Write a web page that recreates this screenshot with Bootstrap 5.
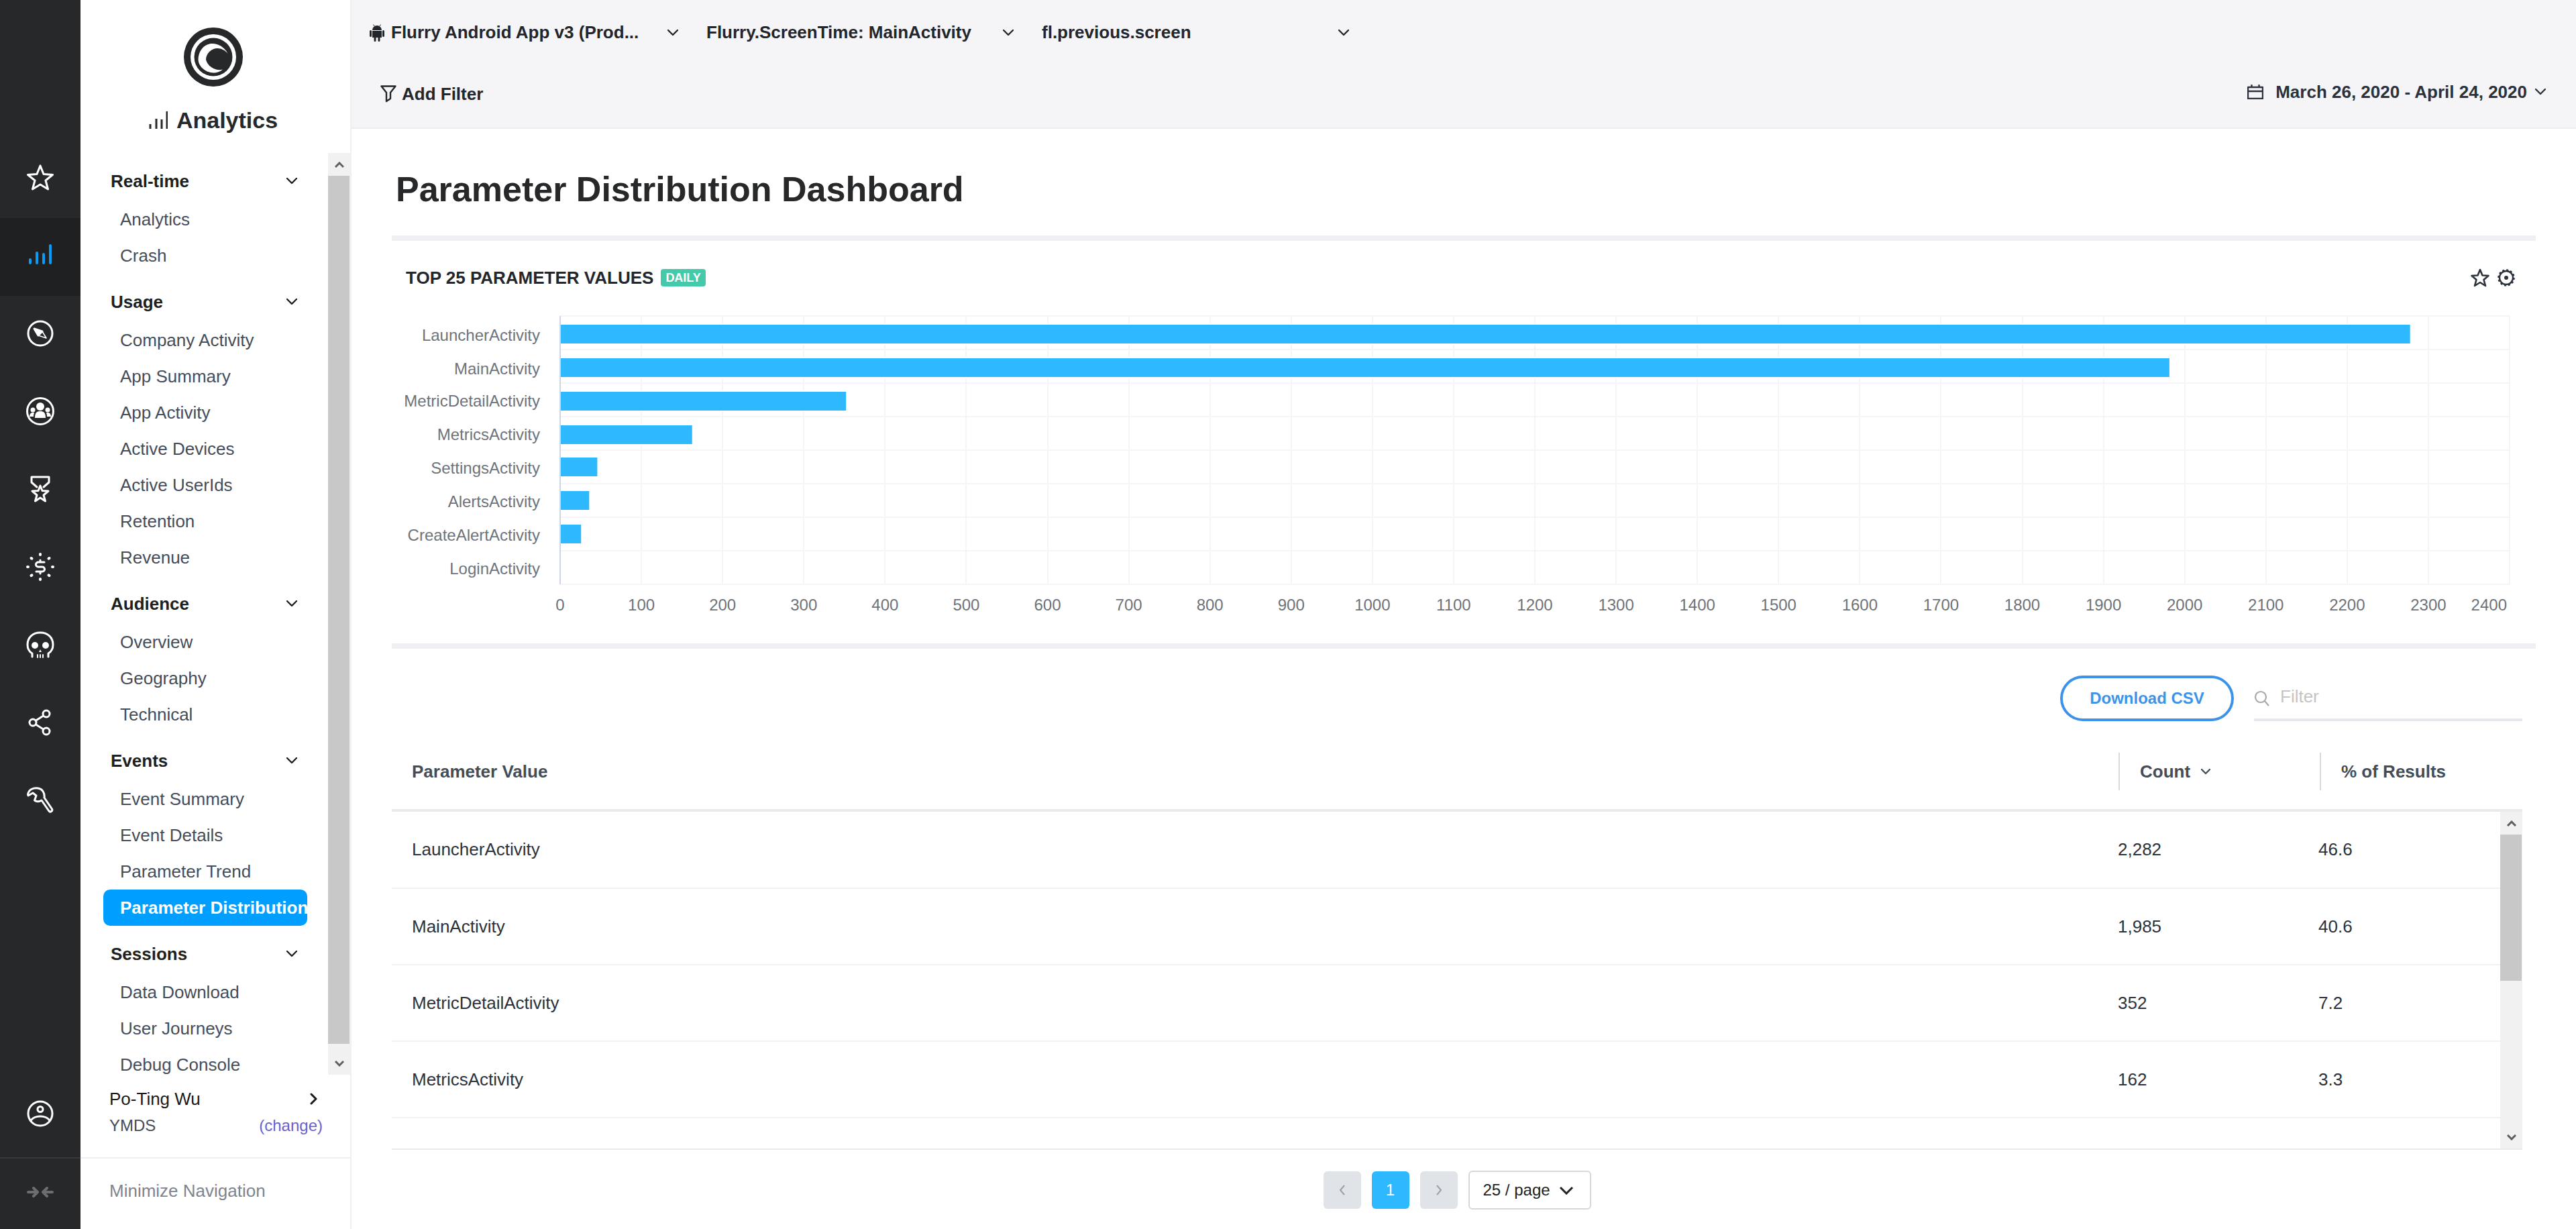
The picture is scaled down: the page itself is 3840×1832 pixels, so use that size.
<!DOCTYPE html>
<html lang="en">
<head>
  <meta charset="UTF-8">
  <meta name="viewport" content="width=device-width, initial-scale=1.0">
  <title>Parameter Distribution Dashboard</title>
  <link href="https://cdn.jsdelivr.net/npm/bootstrap@5.3.0/dist/css/bootstrap.min.css" rel="stylesheet">
  <style>
    body { font-family: "Liberation Sans", Arial, sans-serif; font-size: 26px; color: #2b323c; background: #fff; }
    svg { display: block; flex: none; }

    /* left icon rail */
    .rail { width: 120px; background: #27282a; }
    .rail-list { padding-top: 209px; }
    .rail-item { height: 116px; padding-bottom: 4px; }
    .rail-item.on { background: #1f2022; }
    .rail-user { height: 123px; padding-bottom: 8px; }
    .rail-foot { height: 107px; border-top: 2px solid #37383a; padding-bottom: 6px; }
    .rail svg { stroke: #fff; fill: none; stroke-width: 3; stroke-linejoin: round; stroke-linecap: round; }

    /* side menu */
    .side { width: 404px; border-right: 2px solid #f0f0f2; }
    .brand { height: 228px; padding: 41px 6px 0 0; }
    .brand-name { font-size: 34px; font-weight: 700; color: #27282a; margin-top: 25px; line-height: 50px; }
    .brand-name svg { margin-right: 13px; }
    .side-scroll { height: 1374px; }
    .side-menu { width: 369px; }
    .sn-head { height: 60px; margin-top: 12px; padding: 0 46px 0 45px; font-weight: 700; color: #1e1f21; }
    .sn-item { height: 54px; line-height: 54px; margin-left: 34px; width: 304px; padding-left: 25px; color: #454d5a; white-space: nowrap; overflow: hidden; }
    .sn-item.on { background: #009fff; color: #fff; font-weight: 700; border-radius: 10px; }
    .user-box { height: 123px; padding: 16px 41px 0 43px; }
    .user-name { color: #1a1a1a; line-height: 40px; padding-right: 7px; }
    .user-org { font-size: 24px; color: #454d5a; line-height: 40px; }
    .user-org span { color: #6a5fd0; }
    .side-foot { height: 107px; border-top: 2px solid #f0f0f2; padding: 0 0 8px 43px; color: #7d8590; }

    /* fake scrollbars */
    .sb { background: #f1f1f1; width: 33px; }
    .sb-btn { height: 34px; }
    .sb-thumb { background: #c8c8c8; margin-right: 1px; }
    .side .sb-thumb { height: 1294px; }
    .table-wrap .sb-thumb { height: 218px; }
    .sb svg { stroke: #5f5f5f; fill: none; stroke-width: 3; }

    /* top filters */
    .top-bar { height: 192px; background: #f5f5f8; border-bottom: 2px solid #ececef; font-weight: 700; color: #23262b; }
    .top-row1 { height: 96px; padding-left: 27px; padding-top: 1px; }
    .top-sel { width: 500px; padding-right: 42px; }
    .top-sel.first { width: 502px; }
    .android-wrap { gap: 10px; }
    .top-row2 { height: 88px; padding: 0 45px 0 43px; }
    .date-pick { color: #2b323c; margin-bottom: 6px; }
    .date-text { margin: 0 12px 0 18px; }
    .stroke-icon { stroke: currentColor; fill: none; stroke-width: 2.4; stroke-linecap: round; stroke-linejoin: round; }

    /* page body */
    .page-body { padding: 0 60px; }
    .page-title { height: 159px; padding: 21px 0 0 6px; margin: 0; font-size: 52px; font-weight: 700; color: #27282a; line-height: 138px; }
    .rule-thick { height: 8px; background: #f0f0f4; }
    .chart-head { height: 100px; padding: 10px 31px 0 21px; }
    .chart-icons { gap: 12px; }
    .chart-title { font-weight: 700; font-size: 26px; color: #23262b; }
    .tag-daily { font-size: 18px; font-weight: 700; color: #fff; background: #45c9ab; border-radius: 4px; padding: 0 7px; height: 26px; line-height: 26px; margin-left: 11px; }
    .chart-box { height: 500px; }
    .chart-box text { font-size: 24px; fill: #6e7379; font-family: "Liberation Sans", Arial, sans-serif; }
    .tools { height: 155px; padding: 40px 20px 0 0; }
    .btn-csv { height: 68px; width: 259px; border: 4px solid #3d93e8; color: #3d93e8; font-size: 24px; font-weight: 700; background: #fff; padding: 0; }
    .filter-box { width: 400px; height: 68px; margin-left: 30px; border-bottom: 4px solid #e8e8ec; padding-bottom: 2px; }
    .filter-box svg { margin-top: 6px; }
    .filter-box input { border: 0; outline: 0; width: 340px; margin-left: 15px; font-size: 26px; background: transparent; padding: 0; color: #2b323c; }
    .filter-box input::placeholder { color: #c4c4c4; }
    .table-wrap { width: 3176px; }
    .head-row { height: 88px; border-bottom: 4px solid #e9e9ec; font-weight: 700; color: #454d57; padding-bottom: 28px; }
    .hcol-a { width: 2574px; padding-left: 30px; }
    .hcol-b { width: 300px; height: 56px; border-left: 2px solid #d9d9dc; padding-left: 30px; }
    .hcol-c { width: 302px; height: 56px; border-left: 2px solid #d9d9dc; padding-left: 30px; }
    .tbody-wrap { height: 504px; border-bottom: 2px solid #e9e9ec; }
    .rows-clip { width: 3143px; overflow: hidden; }
    .rows { width: 3143px; table-layout: fixed; }
    .rows td { height: 114px; padding: 0; vertical-align: middle; font-size: 26px; color: #2b323c; border-bottom: 2px solid #f2f2f4; }
    .rows td:first-child { padding-left: 30px; }
    .rows .cw-a { width: 2573px; }
    .rows .cw-b { width: 299px; }
    .pager { width: 3176px; margin-top: 31px; gap: 16px; }
    .pg-btn { width: 56px; height: 56px; border-radius: 6px; background: #e0e3e7; color: #9aa0a6; font-size: 24px; }
    .pg-btn.on { background: #2eb9ff; color: #fff; }
    .pg-size { width: 183px; height: 58px; background: #fff; border: 2px solid #d5d9dc; border-radius: 6px; font-size: 24px; color: #222; padding: 0 24px 0 20px; }
  </style>
</head>
<body class="vh-100 overflow-hidden">
  <div class="d-flex h-100">
    <!-- Icon rail -->
    <div class="rail d-flex flex-column flex-shrink-0">
      <div class="rail-list flex-grow-1">
        <div class="rail-item d-flex align-items-center justify-content-center">
          <svg width="40" height="40" viewBox="0 0 40 40"><polygon points="20,2 25,14.5 38.5,15.5 28,24 31.5,37 20,30 8.500,37 12,24 1.500,15.500 15,14.500"/></svg>
        </div>
        <div class="rail-item on d-flex align-items-center justify-content-center">
          <svg width="40" height="40" viewBox="0 0 40 40" style="stroke:#0a9cf5;stroke-width:4"><path d="M5 31v-5M15 31V16M25 31V18M35 31V5"/></svg>
        </div>
        <div class="rail-item d-flex align-items-center justify-content-center">
          <svg width="40" height="40" viewBox="0 0 40 40"><circle cx="20" cy="20" r="18"/><polygon points="11,13 23,17 17,23" fill="#fff"/><path d="M23 17l6 10-12-4" stroke-width="1.600"/></svg>
        </div>
        <div class="rail-item d-flex align-items-center justify-content-center">
          <svg width="42" height="42" viewBox="0 0 42 42"><circle cx="21" cy="21" r="19.500"/><g fill="#fff" stroke="none"><circle cx="21" cy="14" r="6"/><path d="M13 31c0-8 3-10 8-10s8 2 8 10z"/><circle cx="10" cy="19" r="3.500"/><circle cx="32" cy="19" r="3.500"/><path d="M5 29c0-4 2-6 5-6 1 0 2 0 2 1-1 2-1 3-1 5zM37 29c0-4-2-6-5-6-1 0-2 0-2 1 1 2 1 3 1 5z"/></g></svg>
        </div>
        <div class="rail-item d-flex align-items-center justify-content-center">
          <svg width="30" height="40" viewBox="0 0 30 40"><path d="M10 17L2 10V2h26v8l-8 7"/><polygon points="15,15 18,22.500 27,23 20,29 22.500,38 15,33 7.500,38 10,29 3,23 12,22.500"/></svg>
        </div>
        <div class="rail-item d-flex align-items-center justify-content-center">
          <svg width="42" height="42" viewBox="0 0 42 42"><path d="M27 14h-9a3.500 3.500 0 0 0 0 7h6a3.500 3.500 0 0 1 0 7h-9M21 11v3M21 28v3"/><path stroke-width="4" d="M21 2v1M21 39v1M2 21h1M39 21h1M7.500 8l1 .7M33.500 33.300l1 .7M7.500 34l1-.7M33.500 8.700l1-.7"/></svg>
        </div>
        <div class="rail-item d-flex align-items-center justify-content-center">
          <svg width="42" height="40" viewBox="0 0 42 40"><path d="M9 38V33C4 30 2 26 2 20 2 9 10 2 21 2s19 7 19 18c0 6-2 10-7 13v5"/><path d="M17 39v-4M21 39v-4M25 39v-4" stroke-width="2"/><circle cx="13" cy="21" r="5" fill="#fff" stroke="none"/><circle cx="29" cy="21" r="5" fill="#fff" stroke="none"/><polygon points="21,27 23,31 19,31" fill="#fff" stroke="none"/></svg>
        </div>
        <div class="rail-item d-flex align-items-center justify-content-center">
          <svg width="36" height="40" viewBox="0 0 36 40"><circle cx="7" cy="20" r="5"/><circle cx="27" cy="7" r="5"/><circle cx="27" cy="33" r="5"/><path d="M11.500 17l11-7M11.500 23l11 7"/></svg>
        </div>
        <div class="rail-item d-flex align-items-center justify-content-center">
          <svg width="42" height="40" viewBox="0 0 42 40"><path d="M18 2C11 .5 4 4 2.500 11l.5 2 7-4 5 4-2.500 7 1.500 1c3 1 6 1 9-1l11 16c2 2.500 6 0 4.500-3L27 16c1-7-3-13-9-14z"/></svg>
        </div>
      </div>
      <div class="rail-user d-flex align-items-center justify-content-center">
        <svg width="40" height="40" viewBox="0 0 40 40"><circle cx="20" cy="20" r="18"/><circle cx="20" cy="13.500" r="4"/><path d="M6 30c4-5 9-6 14-6s10 1 14 6"/></svg>
      </div>
      <div class="rail-foot d-flex align-items-center justify-content-center">
        <svg width="40" height="18" viewBox="0 0 40 18" style="stroke:#6b6d70;stroke-width:4"><path d="M2 9h14M10 3l6 6-6 6M38 9H24M30 3l-6 6 6 6"/></svg>
      </div>
    </div>

    <!-- Side menu -->
    <div class="side d-flex flex-column flex-shrink-0">
      <div class="brand d-flex flex-column align-items-center">
        <svg width="88" height="88" viewBox="0 0 88 88">
          <circle cx="44" cy="44" r="44" fill="#27282a"/>
          <circle cx="44" cy="44" r="34" fill="#fff"/>
          <circle cx="44" cy="44" r="28.500" fill="#27282a"/>
          <path d="M65.700 39C60 28 50 23 40 24 28 26 21.500 37 21.500 48 22 58 32 67 44 67.500 50 67.500 54 66 58 62.500 50 65 36 60 33 48 33 38 42 31 50 31 56 31 62 34 65.700 39z" fill="#fff"/>
        </svg>
        <div class="brand-name d-flex align-items-center">
          <svg width="28" height="26" viewBox="0 0 28 26" fill="none" stroke="#27282a" stroke-width="3"><path d="M2 26v-7M11 26V11M19 26V12M27 26V0"/></svg>Analytics
        </div>
      </div>

      <div class="side-scroll d-flex">
        <div class="side-menu overflow-hidden">
          <div class="sn-head d-flex align-items-center justify-content-between">Real-time <svg class="stroke-icon" width="16" height="10" viewBox="0 0 16 10"><path d="M1 1l7 7 7-7"/></svg></div>
          <div class="sn-item">Analytics</div>
          <div class="sn-item">Crash</div>
          <div class="sn-head d-flex align-items-center justify-content-between">Usage <svg class="stroke-icon" width="16" height="10" viewBox="0 0 16 10"><path d="M1 1l7 7 7-7"/></svg></div>
          <div class="sn-item">Company Activity</div>
          <div class="sn-item">App Summary</div>
          <div class="sn-item">App Activity</div>
          <div class="sn-item">Active Devices</div>
          <div class="sn-item">Active UserIds</div>
          <div class="sn-item">Retention</div>
          <div class="sn-item">Revenue</div>
          <div class="sn-head d-flex align-items-center justify-content-between">Audience <svg class="stroke-icon" width="16" height="10" viewBox="0 0 16 10"><path d="M1 1l7 7 7-7"/></svg></div>
          <div class="sn-item">Overview</div>
          <div class="sn-item">Geography</div>
          <div class="sn-item">Technical</div>
          <div class="sn-head d-flex align-items-center justify-content-between">Events <svg class="stroke-icon" width="16" height="10" viewBox="0 0 16 10"><path d="M1 1l7 7 7-7"/></svg></div>
          <div class="sn-item">Event Summary</div>
          <div class="sn-item">Event Details</div>
          <div class="sn-item">Parameter Trend</div>
          <div class="sn-item on">Parameter Distribution</div>
          <div class="sn-head d-flex align-items-center justify-content-between">Sessions <svg class="stroke-icon" width="16" height="10" viewBox="0 0 16 10"><path d="M1 1l7 7 7-7"/></svg></div>
          <div class="sn-item">Data Download</div>
          <div class="sn-item">User Journeys</div>
          <div class="sn-item">Debug Console</div>
        </div>
        <div class="sb d-flex flex-column">
          <div class="sb-btn d-flex align-items-center justify-content-center"><svg width="14" height="9" viewBox="0 0 14 9"><path d="M1 8l6-6 6 6"/></svg></div>
          <div class="sb-thumb"></div>
          <div class="flex-grow-1"></div>
          <div class="sb-btn d-flex align-items-center justify-content-center"><svg width="14" height="9" viewBox="0 0 14 9"><path d="M1 1l6 6 6-6"/></svg></div>
        </div>
      </div>

      <div class="user-box">
        <div class="user-name d-flex align-items-center justify-content-between">Po-Ting Wu <svg class="stroke-icon" width="12" height="18" viewBox="0 0 12 18" style="stroke-width:3"><path d="M2 2l7 7-7 7"/></svg></div>
        <div class="user-org d-flex justify-content-between">YMDS <span>(change)</span></div>
      </div>
      <div class="side-foot d-flex align-items-center">Minimize Navigation</div>
    </div>

    <!-- Main -->
    <div class="flex-grow-1 d-flex flex-column overflow-hidden">
      <div class="top-bar">
        <div class="top-row1 d-flex align-items-center">
          <div class="top-sel first d-flex align-items-center justify-content-between">
            <span class="android-wrap d-flex align-items-center">
              <svg width="22" height="26" viewBox="0 0 22 26" fill="#23262b"><path d="M4 9a7 7 0 0 1 14 0zM4 10h14v10H4zM0 10.500a1.500 1.500 0 0 1 3 0v7a1.500 1.500 0 0 1-3 0zM19 10.500a1.500 1.500 0 0 1 3 0v7a1.500 1.500 0 0 1-3 0zM6.500 20h3v4.500a1.500 1.500 0 0 1-3 0zM12.500 20h3v4.500a1.500 1.500 0 0 1-3 0z"/><path d="M7 3L5.500 0.500M15 3l1.500-2.500" stroke="#23262b"/></svg>
              <span>Flurry Android App v3 (Prod...</span>
            </span>
            <svg class="stroke-icon" width="16" height="10" viewBox="0 0 16 10"><path d="M1 1l7 7 7-7"/></svg>
          </div>
          <div class="top-sel d-flex align-items-center justify-content-between">Flurry.ScreenTime: MainActivity <svg class="stroke-icon" width="16" height="10" viewBox="0 0 16 10"><path d="M1 1l7 7 7-7"/></svg></div>
          <div class="top-sel d-flex align-items-center justify-content-between">fl.previous.screen <svg class="stroke-icon" width="16" height="10" viewBox="0 0 16 10"><path d="M1 1l7 7 7-7"/></svg></div>
        </div>
        <div class="top-row2 d-flex align-items-center justify-content-between">
          <div class="d-flex align-items-center">
            <svg class="stroke-icon me-2" width="24" height="26" viewBox="0 0 24 26"><path d="M1.500 1.500h21L15 11v9l-6 4V11z"/></svg>
            <span>Add Filter</span>
          </div>
          <div class="date-pick d-flex align-items-center">
            <svg class="stroke-icon" width="24" height="22" viewBox="0 0 24 22"><path d="M1 4h22v17H1zM1 10h22M6.500 1v3M17.500 1v3"/></svg>
            <span class="date-text">March 26, 2020 - April 24, 2020</span>
            <svg class="stroke-icon" width="16" height="10" viewBox="0 0 16 10"><path d="M1 1l7 7 7-7"/></svg>
          </div>
        </div>
      </div>

      <div class="page-body flex-grow-1">
        <h1 class="page-title">Parameter Distribution Dashboard</h1>
        <div class="rule-thick"></div>
        <div class="chart-head d-flex align-items-center justify-content-between">
          <div class="d-flex align-items-center">
            <span class="chart-title">TOP 25 PARAMETER VALUES</span>
            <span class="tag-daily">DAILY</span>
          </div>
          <div class="chart-icons d-flex align-items-center">
            <svg class="stroke-icon" width="28" height="28" viewBox="0 0 28 28" style="stroke-width:2.600"><polygon points="14,2 17.500,10.500 26.500,11 19.500,17 22,26 14,21 6,26 8.500,17 1.500,11 10.500,10.500"/></svg>
            <svg width="26" height="26" viewBox="0 0 26 26" fill="none" stroke="#2b323c"><circle cx="13" cy="13" r="10" stroke-width="2.400"/><circle cx="13" cy="13" r="11.500" stroke-width="2.500" stroke-dasharray="3 3"/><circle cx="13" cy="13" r="3" fill="#2b323c" stroke="none"/></svg>
          </div>
        </div>
        <div class="chart-box" id="chartBox"></div>
        <div class="rule-thick"></div>

        <div class="tools d-flex justify-content-end align-items-start">
          <button class="btn btn-csv rounded-pill" type="button">Download CSV</button>
          <div class="filter-box d-flex align-items-center">
            <svg width="24" height="24" viewBox="0 0 24 24" fill="none" stroke="#a8a8a8" stroke-width="2.200"><circle cx="10" cy="10" r="8"/><path d="M16 16l6 7"/></svg>
            <input type="text" placeholder="Filter">
          </div>
        </div>

        <div class="table-wrap">
          <div class="head-row d-flex align-items-center">
            <div class="hcol-a">Parameter Value</div>
            <div class="hcol-b d-flex align-items-center gap-3">Count <svg class="stroke-icon" width="14" height="9" viewBox="0 0 14 9"><path d="M1 1l6 6 6-6"/></svg></div>
            <div class="hcol-c d-flex align-items-center">% of Results</div>
          </div>
          <div class="tbody-wrap d-flex">
            <div class="rows-clip">
              <table class="rows">
                <colgroup><col class="cw-a"><col class="cw-b"><col></colgroup>
                <tbody id="tableRows"></tbody>
              </table>
            </div>
            <div class="sb d-flex flex-column">
              <div class="sb-btn d-flex align-items-center justify-content-center"><svg width="14" height="9" viewBox="0 0 14 9"><path d="M1 8l6-6 6 6"/></svg></div>
              <div class="sb-thumb"></div>
              <div class="flex-grow-1"></div>
              <div class="sb-btn d-flex align-items-center justify-content-center"><svg width="14" height="9" viewBox="0 0 14 9"><path d="M1 1l6 6 6-6"/></svg></div>
            </div>
          </div>
        </div>

        <div class="pager d-flex justify-content-center align-items-center">
          <div class="pg-btn d-flex align-items-center justify-content-center"><svg width="10" height="18" viewBox="0 0 10 18" fill="none" stroke="#9aa0a6" stroke-width="2"><path d="M8 2L2 9l6 7"/></svg></div>
          <div class="pg-btn on d-flex align-items-center justify-content-center">1</div>
          <div class="pg-btn d-flex align-items-center justify-content-center"><svg width="10" height="18" viewBox="0 0 10 18" fill="none" stroke="#9aa0a6" stroke-width="2"><path d="M2 2l6 7-6 7"/></svg></div>
          <div class="pg-size d-flex align-items-center justify-content-between">25 / page <svg width="22" height="13" viewBox="0 0 22 13" fill="none" stroke="#222" stroke-width="3"><path d="M2 2l9 9 9-9"/></svg></div>
        </div>
      </div>
    </div>
  </div>

  <script>
    const data = [
      ['LauncherActivity', 2282, '2,282', '46.6', 484, 508],
      ['MainActivity', 1985, '1,985', '40.6', 534, 558],
      ['MetricDetailActivity', 352, '352', '7.2', 584, 606],
      ['MetricsActivity', 162, '162', '3.3', 634, 656],
      ['SettingsActivity', 45, '45', '1', 682, 706],
      ['AlertsActivity', 35, '35', '', 732, 756],
      ['CreateAlertActivity', 25, '25', '', 782, 806],
      ['LoginActivity', 0, '', '', 0, 856]
    ];

    // chart coordinates are page pixels, the box starts at x 584, y 459
    const ox = 584, oy = 459, left = 835, top0 = 471, perUnit = 2906 / 2400;
    let svg = '';
    for (let i = 0; i <= 8; i++) {
      const y = top0 + i * 50 - oy;
      svg += `<line x1="${left - ox}" x2="${3741 - ox}" y1="${y}" y2="${y}" stroke="#f5f5f7" stroke-width="2"/>`;
    }
    for (let v = 100; v <= 2400; v += 100) {
      const x = Math.round(left + v * perUnit) - ox;
      svg += `<line x1="${x}" x2="${x}" y1="${top0 - oy}" y2="${871 - oy}" stroke="#f5f5f7" stroke-width="2"/>`;
    }
    data.forEach(d => {
      if (d[1]) {
        svg += `<rect x="${left + 1 - ox}" y="${d[4] - oy}" width="${d[1] * 1.208}" height="28" fill="#2eb9ff" stroke="#fff" stroke-width="4" paint-order="stroke"/>`;
      }
      svg += `<text x="${805 - ox}" y="${d[5] - oy}" text-anchor="end">${d[0]}</text>`;
    });
    svg += `<line x1="${left - ox}" x2="${left - ox}" y1="${top0 - oy}" y2="${871 - oy}" stroke="#ccd6eb" stroke-width="2"/>`;
    for (let v = 0; v <= 2300; v += 100) {
      svg += `<text x="${left + v * perUnit - ox}" y="${910 - oy}" text-anchor="middle">${v}</text>`;
    }
    svg += `<text x="${3737 - ox}" y="${910 - oy}" text-anchor="end">2400</text>`;
    document.getElementById('chartBox').innerHTML = `<svg width="3196" height="500" viewBox="0 0 3196 500">${svg}</svg>`;

    document.getElementById('tableRows').innerHTML = data.slice(0, 5).map(d =>
      `<tr><td>${d[0]}</td><td>${d[2]}</td><td>${d[3]}</td></tr>`).join('');
  </script>
  <script src="https://cdn.jsdelivr.net/npm/bootstrap@5.3.0/dist/js/bootstrap.bundle.min.js"></script>
</body>
</html>
